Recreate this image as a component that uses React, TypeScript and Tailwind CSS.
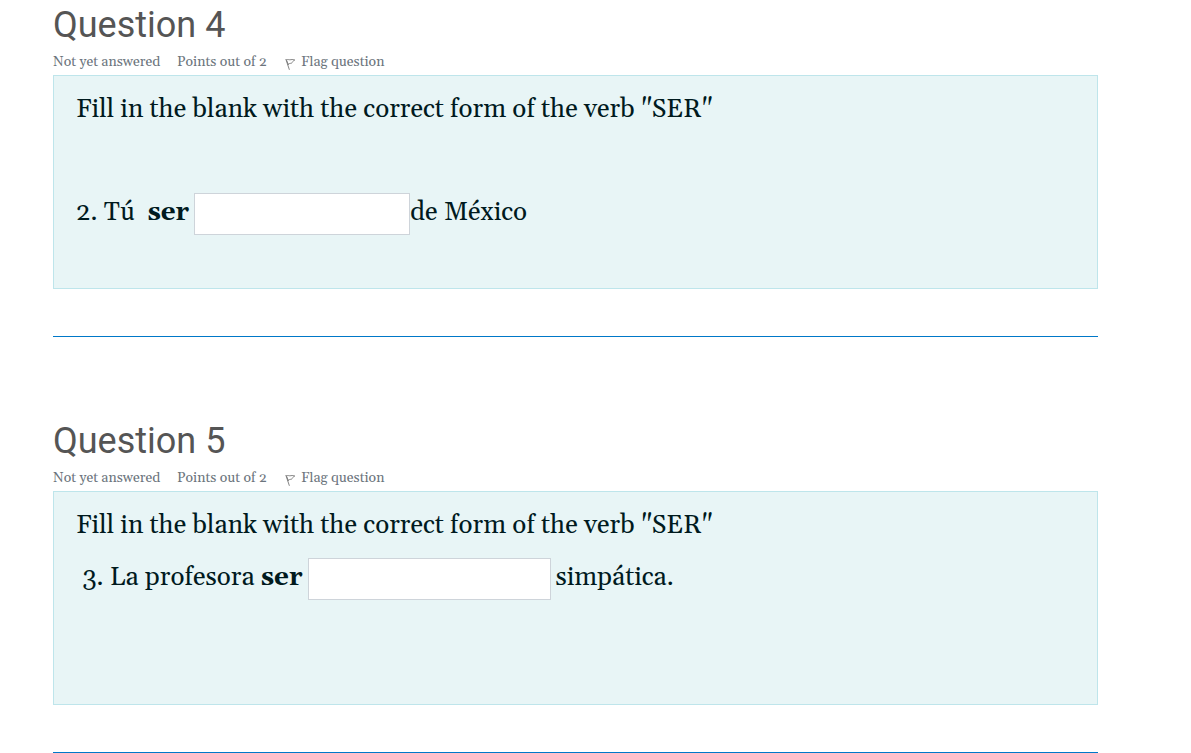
import React, { type ReactNode } from "react";

function FlagIcon() {
  return (
    <svg aria-hidden="true" className="mt-2 h-3 w-3 shrink-0" viewBox="0 0 12 12" fill="none" stroke="#777" strokeWidth="0.9">
      <path d="M.8 1 L4.4 11.8 M1.6 2.2 L3.4 7 M1.2 1.9 C3 .9 4.4 2.2 6 1.7 C7.4 1.3 8.4 1.6 9.8 2 C8 2.8 7.4 4 6.4 5.4 C5 5.2 4 5.6 2.8 6.6" />
    </svg>
  );
}

function Question({ number, children }: { number: number; children: ReactNode }) {
  return (
    <section className="border-b border-[#0078c8] pb-[47px]">
      <h2 className="font-['Roboto',sans-serif] text-4xl leading-[50px] text-[#555555]">Question {number}</h2>
      <div className="flex h-[25px] items-start text-sm leading-6 text-[#6c757d]">
        <span className="w-31">Not yet answered</span>
        <span className="w-27">Points out of 2</span>
        <a href="#flag" className="flex gap-1">
          <FlagIcon />
          Flag question
        </a>
      </div>
      <div className="min-h-[214px] border border-[#bee5eb] bg-[#e8f5f6] px-[22px] pt-[14px] text-[26px] text-[#001a1e]">
        <p className="leading-10">Fill in the blank with the correct form of the verb "SER"</p>
        {children}
      </div>
    </section>
  );
}

export default function App() {
  return (
    <main className="mr-[93px] ml-[53px] flex flex-col gap-[79px] font-['Georgia','Gelasio','Liberation_Serif',serif] leading-9">
      <Question number={4}>
        <label className="mt-[63px] flex items-center">
          <span className="pb-0.5">
            2. Tú&nbsp; <b>ser</b>
          </span>
          <input type="text" className="ml-[5px] h-[42px] w-[216px] border border-[#ced4da] bg-white px-3" />
          <span className="pb-0.5">de México</span>
        </label>
      </Question>
      <Question number={5}>
        <label className="mt-3 flex items-center">
          <span className="pb-0.5">
            &nbsp;3. La profesora <b>ser</b>
          </span>
          <input type="text" className="mx-[5px] h-[42px] w-[243px] border border-[#ced4da] bg-white px-3" />
          <span className="pb-0.5">simpática.</span>
        </label>
      </Question>
    </main>
  );
}
